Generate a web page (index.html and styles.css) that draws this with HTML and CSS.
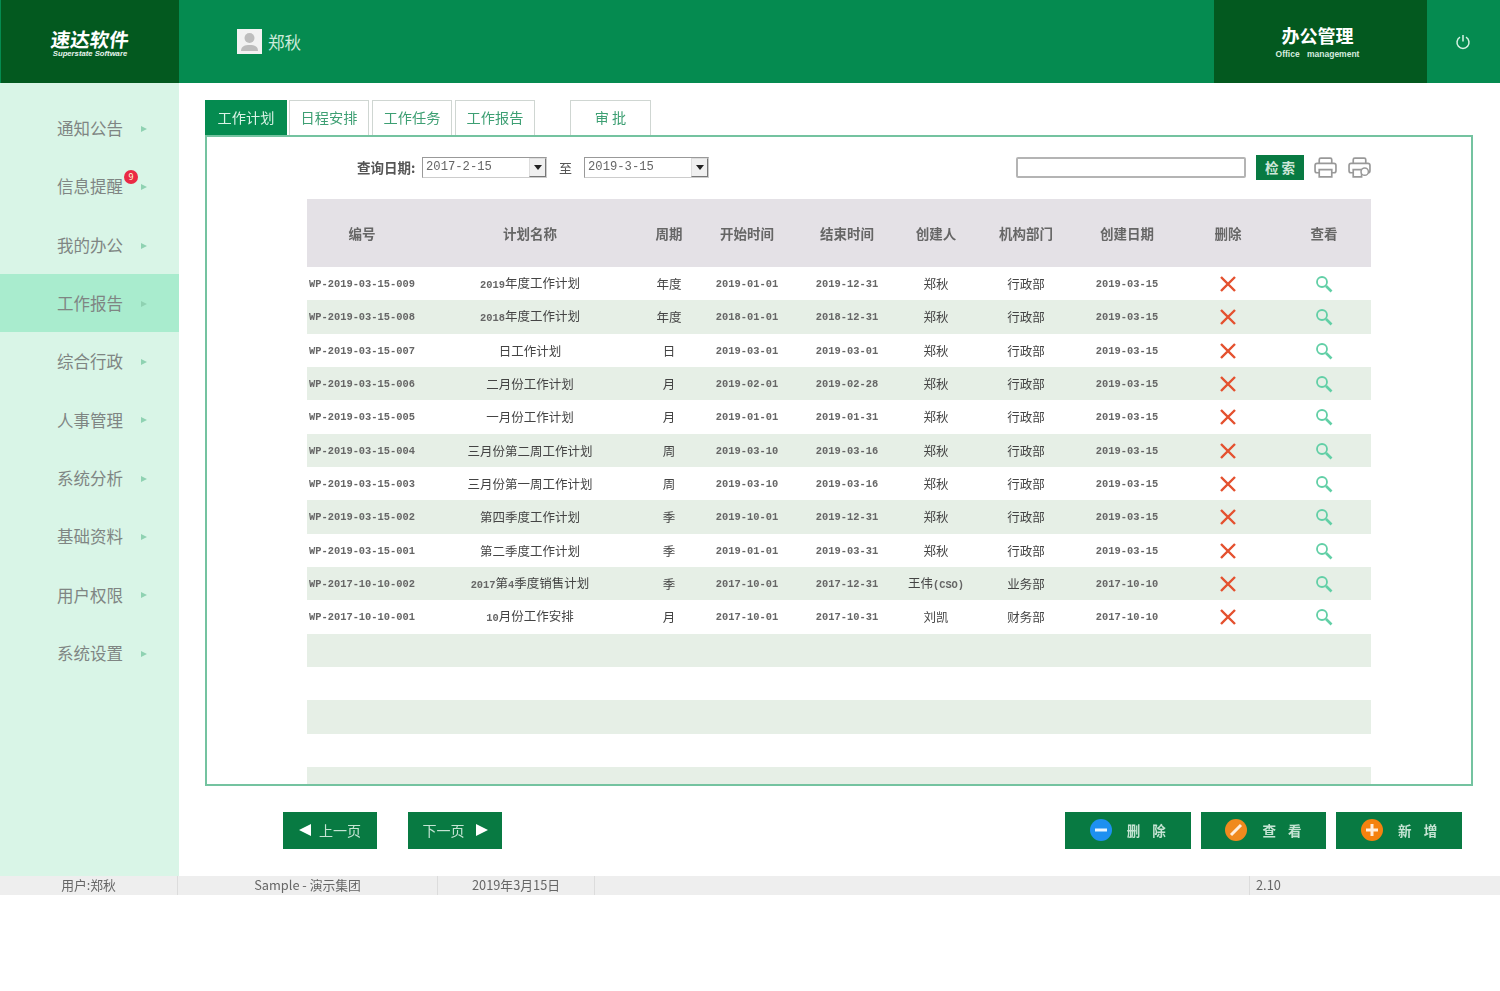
FILE: index.html
```html
<!DOCTYPE HTML>
<html lang='zh-CN'>
<head>
<meta charset='utf-8'>
<title>办公管理</title>
<link rel="stylesheet" href="styles.css">
</head>
<body>
<svg class='defs' width='0' height='0'>
<symbol id='i_x' viewBox='0 0 18 18'><path d='M2 2L16 16M16 2L2 16' fill='none' stroke='#e4512f' stroke-width='2.4'/></symbol>
<symbol id='i_find' viewBox='0 0 18 18'><circle cx='7' cy='7' r='5' fill='none' stroke='#62cfa6' stroke-width='1.8'/><path d='M11 11L16.5 16.5' fill='none' stroke='#62cfa6' stroke-width='2.6'/></symbol>
</svg>
<!--Main Container starts here-->
<div class='main_container'>
<!--header section starts here-->
<div class='header'>
<div class='brand_name'>
<b>速达软件</b>
<span>Superstate Software</span>
</div>
<div class='user'>
<svg class='avatar' viewBox='0 0 25 25'><rect width='25' height='25' fill='#f2f2f2'/><circle cx='12.5' cy='9' r='5' fill='#bdbdbd'/><path d='M4 22c0-5 4-6 8.500-6s8.500 1 8.500 6z' fill='#bdbdbd'/></svg>
郑秋
</div>
<div class='module_name'>
<b>办公管理</b>
<span>Office management</span>
</div>
<div class='power'>
<svg width='16' height='16' viewBox='0 0 16 16'><path d='M5 3.200a6 6 0 1 0 6 0M8 1v6.500' fill='none' stroke='#d8f2e4' stroke-width='1.500'/></svg>
</div>
</div>
<!--header section ends here-->
<!-- Content Section starts here-->
<div class='content'>
<!--left panel starts here-->
<div class='left_panel'>
<a href='#'>通知公告<i></i></a>
<a href='#'>信息提醒<em>9</em><i></i></a>
<a href='#'>我的办公<i></i></a>
<a href='#' class='active'>工作报告<i></i></a>
<a href='#'>综合行政<i></i></a>
<a href='#'>人事管理<i></i></a>
<a href='#'>系统分析<i></i></a>
<a href='#'>基础资料<i></i></a>
<a href='#'>用户权限<i></i></a>
<a href='#'>系统设置<i></i></a>
</div>
<!--left panel ends here-->
<!--Right panel starts here-->
<div class='right_panel'>
<div class='tabs'>
<a href='#' class='tab tab_on'>工作计划</a>
<a href='#' class='tab'>日程安排</a>
<a href='#' class='tab'>工作任务</a>
<a href='#' class='tab'>工作报告</a>
<a href='#' class='tab tab_approve'>审 批</a>
</div>
<div class='panel'>
<div class='toolbar'>
<span class='date_label'>查询日期:</span>
<span class='date_box'>2017-2-15<i></i></span>
<span class='date_to'>至</span>
<span class='date_box'>2019-3-15<i></i></span>
<input type='text' class='search_box'>
<button type='button' class='search_btn'>检 索</button>
<svg class='tool_icon' viewBox='0 0 22 20'><path d='M5 6V2.500Q5 1 6.500 1h9Q17 1 17 2.500V6M5 15H3Q1 15 1 13V8Q1 6 3 6h16q2 0 2 2v5q0 2-2 2h-2M5 12h12v7H5z' fill='none' stroke='#999' stroke-width='1.600'/></svg>
<svg class='tool_icon tool_last' viewBox='0 0 22 20'><path d='M5 6V2.500Q5 1 6.500 1h9Q17 1 17 2.500V6M5 15H3Q1 15 1 13V8Q1 6 3 6h16q2 0 2 2v5q0 2-2 2h-2M5 12h8v7H5z' fill='none' stroke='#999' stroke-width='1.600'/><circle cx='16' cy='14' r='3.500' fill='#fff' stroke='#999' stroke-width='1.400'/></svg>
</div>
<table class='plan_table'>
<colgroup>
<col class='c1'><col class='c2'><col class='c3'><col class='c4'><col class='c5'>
<col class='c6'><col class='c7'><col class='c8'><col class='c9'><col class='c10'>
</colgroup>
<thead>
<tr><th>编号</th><th>计划名称</th><th>周期</th><th>开始时间</th><th>结束时间</th><th>创建人</th><th>机构部门</th><th>创建日期</th><th>删除</th><th>查看</th></tr>
</thead>
<tbody>
<tr><td class='num'>WP-2019-03-15-009</td><td><span class='num'>2019</span>年度工作计划</td><td>年度</td><td class='num'>2019-01-01</td><td class='num'>2019-12-31</td><td>郑秋</td><td>行政部</td><td class='num'>2019-03-15</td><td><svg class='ico'><use href='#i_x'/></svg></td><td><svg class='ico'><use href='#i_find'/></svg></td></tr>
<tr><td class='num'>WP-2019-03-15-008</td><td><span class='num'>2018</span>年度工作计划</td><td>年度</td><td class='num'>2018-01-01</td><td class='num'>2018-12-31</td><td>郑秋</td><td>行政部</td><td class='num'>2019-03-15</td><td><svg class='ico'><use href='#i_x'/></svg></td><td><svg class='ico'><use href='#i_find'/></svg></td></tr>
<tr><td class='num'>WP-2019-03-15-007</td><td>日工作计划</td><td>日</td><td class='num'>2019-03-01</td><td class='num'>2019-03-01</td><td>郑秋</td><td>行政部</td><td class='num'>2019-03-15</td><td><svg class='ico'><use href='#i_x'/></svg></td><td><svg class='ico'><use href='#i_find'/></svg></td></tr>
<tr><td class='num'>WP-2019-03-15-006</td><td>二月份工作计划</td><td>月</td><td class='num'>2019-02-01</td><td class='num'>2019-02-28</td><td>郑秋</td><td>行政部</td><td class='num'>2019-03-15</td><td><svg class='ico'><use href='#i_x'/></svg></td><td><svg class='ico'><use href='#i_find'/></svg></td></tr>
<tr><td class='num'>WP-2019-03-15-005</td><td>一月份工作计划</td><td>月</td><td class='num'>2019-01-01</td><td class='num'>2019-01-31</td><td>郑秋</td><td>行政部</td><td class='num'>2019-03-15</td><td><svg class='ico'><use href='#i_x'/></svg></td><td><svg class='ico'><use href='#i_find'/></svg></td></tr>
<tr><td class='num'>WP-2019-03-15-004</td><td>三月份第二周工作计划</td><td>周</td><td class='num'>2019-03-10</td><td class='num'>2019-03-16</td><td>郑秋</td><td>行政部</td><td class='num'>2019-03-15</td><td><svg class='ico'><use href='#i_x'/></svg></td><td><svg class='ico'><use href='#i_find'/></svg></td></tr>
<tr><td class='num'>WP-2019-03-15-003</td><td>三月份第一周工作计划</td><td>周</td><td class='num'>2019-03-10</td><td class='num'>2019-03-16</td><td>郑秋</td><td>行政部</td><td class='num'>2019-03-15</td><td><svg class='ico'><use href='#i_x'/></svg></td><td><svg class='ico'><use href='#i_find'/></svg></td></tr>
<tr><td class='num'>WP-2019-03-15-002</td><td>第四季度工作计划</td><td>季</td><td class='num'>2019-10-01</td><td class='num'>2019-12-31</td><td>郑秋</td><td>行政部</td><td class='num'>2019-03-15</td><td><svg class='ico'><use href='#i_x'/></svg></td><td><svg class='ico'><use href='#i_find'/></svg></td></tr>
<tr><td class='num'>WP-2019-03-15-001</td><td>第二季度工作计划</td><td>季</td><td class='num'>2019-01-01</td><td class='num'>2019-03-31</td><td>郑秋</td><td>行政部</td><td class='num'>2019-03-15</td><td><svg class='ico'><use href='#i_x'/></svg></td><td><svg class='ico'><use href='#i_find'/></svg></td></tr>
<tr><td class='num'>WP-2017-10-10-002</td><td><span class='num'>2017</span>第<span class='num'>4</span>季度销售计划</td><td>季</td><td class='num'>2017-10-01</td><td class='num'>2017-12-31</td><td>王伟<span class='num'>(CSO)</span></td><td>业务部</td><td class='num'>2017-10-10</td><td><svg class='ico'><use href='#i_x'/></svg></td><td><svg class='ico'><use href='#i_find'/></svg></td></tr>
<tr><td class='num'>WP-2017-10-10-001</td><td><span class='num'>10</span>月份工作安排</td><td>月</td><td class='num'>2017-10-01</td><td class='num'>2017-10-31</td><td>刘凯</td><td>财务部</td><td class='num'>2017-10-10</td><td><svg class='ico'><use href='#i_x'/></svg></td><td><svg class='ico'><use href='#i_find'/></svg></td></tr>
<tr><td colspan='10'></td></tr>
<tr><td colspan='10'></td></tr>
<tr><td colspan='10'></td></tr>
<tr><td colspan='10'></td></tr>
<tr><td colspan='10'></td></tr>
</tbody>
</table>
</div>
<div class='actions'>
<button type='button' class='btn btn_page'><span class='arrow_left'></span>上一页</button>
<button type='button' class='btn btn_page btn_next'>下一页<span class='arrow_right'></span></button>
<button type='button' class='btn btn_act btn_first'>
<svg class='act_icon' viewBox='0 0 22 22'><circle cx='11' cy='11' r='11' fill='#1e90f0'/><path d='M5 11h12' stroke='#e8f4ff' stroke-width='3'/></svg>删 除</button>
<button type='button' class='btn btn_act'>
<svg class='act_icon' viewBox='0 0 22 22'><circle cx='11' cy='11' r='11' fill='#f08a1e'/><path d='M6 16L16 6' stroke='#ffeedd' stroke-width='3'/></svg>查 看</button>
<button type='button' class='btn btn_act'>
<svg class='act_icon' viewBox='0 0 22 22'><circle cx='11' cy='11' r='11' fill='#f5820f'/><path d='M5 11h12M11 5v12' stroke='#ffeedd' stroke-width='3'/></svg>新 增</button>
</div>
</div>
<!--Right panel ends here-->
</div>
<!--Content Section ends here-->
<!--footer section starts here-->
<div class='footer'>
<div class='f_user'>用户:郑秋</div>
<div class='f_company'>Sample - 演示集团</div>
<div class='f_date'>2019年3月15日</div>
<div class='f_blank'></div>
<div class='f_version'>2.10</div>
</div>
<!--footer section ends here-->
</div>
<!--Main Container ends here-->
</body>
</html>
```

FILE: styles.css
```css
*
{
box-sizing:border-box;
}
body
{
margin:0;
background:#fff;
font-family:"Noto Sans CJK SC","Liberation Sans",sans-serif;
color:#555;
}
a
{
text-decoration:none;
}
.defs
{
position:absolute;
}
.main_container
{
width:1500px;
filter:blur(0.7px);
}
/* header */
.header
{
height:83px;
display:flex;
background:#058b50;
color:#fff;
padding-left:1px;
padding-right:2px;
}
.brand_name
{
width:178px;
background:#03591f;
display:flex;
flex-direction:column;
align-items:center;
justify-content:center;
padding-top:3px;
}
.brand_name b
{
font-size:19.500px;
line-height:22px;
transform:skewX(-7deg);
}
.brand_name span
{
font-family:"Liberation Sans",sans-serif;
font-size:7.700px;
font-weight:bold;
font-style:italic;
line-height:8px;
color:#e8f5ee;
}
.user
{
flex:1;
display:flex;
align-items:center;
gap:6px;
padding-left:58px;
font-size:16.500px;
color:#cdebdb;
}
.avatar
{
width:25px;
height:25px;
}
.module_name
{
width:213px;
background:#03591f;
display:flex;
flex-direction:column;
align-items:center;
justify-content:center;
padding-right:6px;
padding-bottom:1px;
}
.module_name b
{
font-size:18px;
line-height:25px;
}
.module_name span
{
font-family:"Liberation Sans",sans-serif;
font-size:8.500px;
font-weight:bold;
line-height:12px;
word-spacing:5px;
color:#d5ecdf;
}
.power
{
width:71px;
display:flex;
align-items:center;
justify-content:center;
}
/* content */
.content
{
height:793px;
display:flex;
}
.left_panel
{
width:179px;
padding-top:16px;
background:#d9f5e7;
}
.left_panel a
{
height:58.300px;
padding-left:57px;
display:flex;
align-items:center;
position:relative;
font-size:16.500px;
color:#7f8583;
}
.left_panel a.active
{
background:#a9ecce;
}
.left_panel i
{
position:absolute;
left:141px;
top:27px;
border-left:6px solid #8fd2b2;
border-top:3.500px solid transparent;
border-bottom:3.500px solid transparent;
}
.left_panel em
{
position:absolute;
left:124px;
top:13px;
width:14px;
height:14px;
border-radius:50%;
background:#ea2a45;
color:#ffd;
font-size:9px;
font-style:normal;
line-height:14px;
text-align:center;
}
.right_panel
{
flex:1;
padding-top:17px;
padding-left:26px;
}
.tabs
{
display:flex;
height:35px;
gap:3px;
}
.tab
{
width:80px;
border:1px solid #cfd6d2;
border-bottom:none;
text-align:center;
font-size:14.200px;
line-height:32px;
color:#3d9f73;
}
.tab_on
{
width:82px;
margin-right:-1px;
background:#058b50;
border-color:#058b50;
color:#d9f3e6;
}
.tab_approve
{
width:81px;
margin-left:32px;
}
.panel
{
width:1268px;
height:651px;
border:2px solid #74c3a0;
overflow:hidden;
}
.toolbar
{
height:62px;
display:flex;
align-items:center;
font-size:13.500px;
color:#555;
padding-bottom:2px;
}
.date_label
{
margin-left:150px;
width:65px;
font-weight:bold;
}
.date_box
{
width:125px;
height:21px;
border:1px solid #999;
border-bottom-color:#ccc;
border-right-color:#ccc;
font-family:"Liberation Mono",monospace;
font-size:12.200px;
line-height:18px;
padding-left:3px;
position:relative;
color:#666;
}
.date_box i
{
position:absolute;
right:0;
top:0;
width:17px;
height:19px;
background:#f0f0f0;
border:1px solid #777;
border-top-color:#ddd;
border-left-color:#ddd;
}
.date_box i:after
{
content:'';
position:absolute;
left:4px;
top:6px;
border-top:5px solid #222;
border-left:4px solid transparent;
border-right:4px solid transparent;
}
.date_to
{
width:37px;
text-align:center;
font-size:13px;
}
.search_box
{
margin-left:307px;
width:230px;
height:21px;
border:2px solid #b4b4b4;
border-radius:2px;
background:#fff;
}
.search_btn
{
margin-left:10px;
width:48px;
height:25px;
border:none;
background:#087a42;
color:#cfe8da;
font-family:inherit;
font-size:13.500px;
font-weight:bold;
padding:0;
}
.tool_icon
{
margin-left:10px;
width:23px;
height:21px;
}
.tool_last
{
margin-left:11px;
}
.plan_table
{
margin-left:100px;
width:1064px;
table-layout:fixed;
border-collapse:collapse;
font-size:12.500px;
color:#444;
}
.c1{width:110px;}
.c2{width:226px;}
.c3{width:52px;}
.c4{width:104px;}
.c5{width:96px;}
.c6{width:82px;}
.c7{width:98px;}
.c8{width:104px;}
.c9{width:98px;}
.c10{width:94px;}
.plan_table thead tr
{
height:68px;
background:#e4e1e6;
}
.plan_table th
{
padding:0;
font-size:13.500px;
font-weight:bold;
color:#666;
}
.plan_table tbody tr
{
height:33.340px;
}
.plan_table tbody tr:nth-child(even)
{
background:#e6efe6;
}
.plan_table td
{
padding:1px 0 0 0;
text-align:center;
line-height:18px;
white-space:nowrap;
}
.num
{
font-family:"Liberation Mono",monospace;
font-size:10.400px;
font-weight:bold;
color:#666;
}
.ico
{
display:block;
margin:0 auto;
width:18px;
height:18px;
}
/* buttons */
.actions
{
height:90px;
display:flex;
align-items:center;
padding-bottom:2px;
}
.btn
{
height:37px;
border:none;
background:#087a42;
color:#c5e4d3;
font-family:inherit;
font-size:14px;
padding:0;
display:flex;
align-items:center;
justify-content:center;
}
.btn_page
{
width:94px;
margin-left:78px;
gap:8px;
}
.btn_next
{
margin-left:31px;
gap:11px;
}
.btn_act
{
width:125.670px;
margin-left:10px;
gap:15px;
word-spacing:9px;
font-weight:bold;
font-size:13.500px;
}
.btn_first
{
margin-left:563px;
}
.arrow_left
{
border-right:12px solid #fff;
border-top:6.500px solid transparent;
border-bottom:6.500px solid transparent;
}
.arrow_right
{
border-left:12px solid #fff;
border-top:6.500px solid transparent;
border-bottom:6.500px solid transparent;
}
.act_icon
{
width:22px;
height:22px;
}
/* footer */
.footer
{
height:19px;
display:flex;
background:#eee;
font-size:12.800px;
line-height:17px;
color:#666;
text-align:center;
}
.footer div
{
border-right:1px solid #dcdcdc;
}
.f_user{width:178px;}
.f_company{width:260px;}
.f_date{width:157px;}
.f_blank{width:655px;}
.footer .f_version
{
flex:1;
text-align:left;
padding-left:6px;
border-right:none;
}
```
